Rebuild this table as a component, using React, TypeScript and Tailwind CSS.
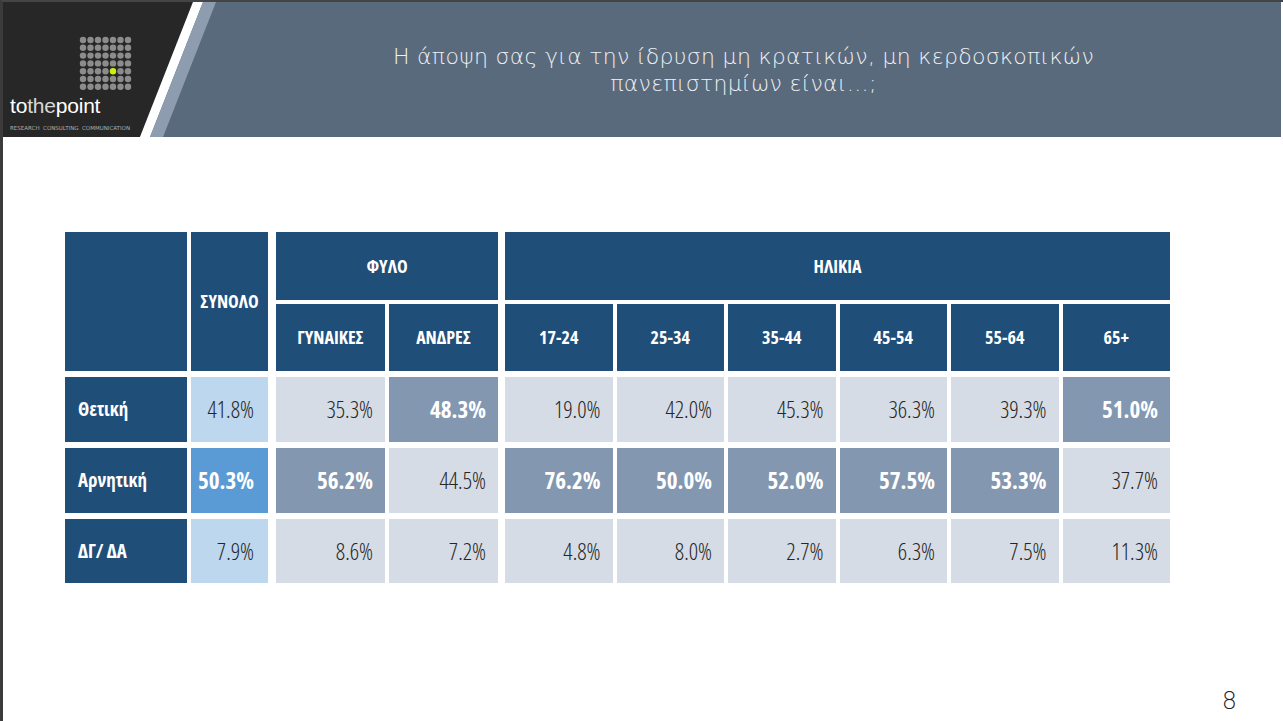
import React from "react";

const rows = [
  {
    label: "Θετική",
    cells: [
      ["41.8%", "s"],
      ["35.3%", "g"],
      ["48.3%", "h"],
      ["19.0%", "g"],
      ["42.0%", "g"],
      ["45.3%", "g"],
      ["36.3%", "g"],
      ["39.3%", "g"],
      ["51.0%", "h"],
    ],
  },
  {
    label: "Αρνητική",
    cells: [
      ["50.3%", "S"],
      ["56.2%", "h"],
      ["44.5%", "g"],
      ["76.2%", "h"],
      ["50.0%", "h"],
      ["52.0%", "h"],
      ["57.5%", "h"],
      ["53.3%", "h"],
      ["37.7%", "g"],
    ],
  },
  {
    label: "ΔΓ/ ΔΑ",
    cells: [
      ["7.9%", "s"],
      ["8.6%", "g"],
      ["7.2%", "g"],
      ["4.8%", "g"],
      ["8.0%", "g"],
      ["2.7%", "g"],
      ["6.3%", "g"],
      ["7.5%", "g"],
      ["11.3%", "g"],
    ],
  },
];

const ages = ["17-24", "25-34", "35-44", "45-54", "55-64", "65+"];

const condFont = {
  fontFamily: '"Open Sans", "DejaVu Sans Condensed", sans-serif',
  fontStretch: "75%",
};

function cellClass(kind: string) {
  switch (kind) {
    case "s":
      return "bg-[#bdd7ee] text-[#262626] font-light";
    case "S":
      return "bg-[#5b9bd5] text-white font-bold";
    case "h":
      return "bg-[#8497b0] text-white font-bold";
    default:
      return "bg-[#d6dce5] text-[#262626] font-light";
  }
}

function DotGrid() {
  const dots = [];
  for (let j = 0; j < 7; j++) {
    for (let i = 0; i < 7; i++) {
      const yellow = i === 4 && j === 4;
      dots.push(
        <circle
          key={`${i}-${j}`}
          cx={4 + i * 7.5}
          cy={4 + j * 7.8}
          r={3.2}
          fill={yellow ? "#cdf012" : "#8c8c8c"}
        />
      );
    }
  }
  return (
    <svg width="54" height="55" viewBox="0 0 54 55">
      {dots}
    </svg>
  );
}

const headCell = "bg-[#1f4e79] flex items-center justify-center text-white font-bold text-[18px]";

export default function App() {
  return (
    <div className="w-[1283px] h-[721px] bg-white flex flex-col border-l-[3px] border-t-[2px] border-l-[#3b3b3b] border-t-[#454545] overflow-hidden">
      {/* Header */}
      <div className="relative h-[135px] flex shrink-0 mr-[2px] -ml-[3px]">
        <svg className="absolute inset-0" width="1281" height="135" viewBox="0 0 1281 135">
          <rect x="0" y="0" width="1281" height="135" fill="#5a6a7d" />
          <polygon points="0,0 193,0 140,135 0,135" fill="#272727" />
          <polygon points="193,0 203,0 150,135 140,135" fill="#ffffff" />
          <polygon points="203,0 216,0 163,135 150,135" fill="#8e9cb0" />
        </svg>
        <div className="relative w-[140px] flex flex-col pl-[10px] pt-[34px]">
          <div className="ml-[69px]">
            <DotGrid />
          </div>
          <div
            className="text-[21px] leading-[21px] text-white mt-[4px] tracking-[-0.2px]"
            style={{ fontFamily: '"Liberation Sans", Arial, sans-serif' }}
          >
            to<span className="text-[#d8d8d8]">the</span>point
          </div>
          <div
            className="mt-[9px] text-[5.5px] leading-[6px] text-[#b0b0b0] tracking-[0px] whitespace-nowrap"
            style={{ fontFamily: '"DejaVu Sans", sans-serif' }}
          >
            RESEARCH&nbsp; CONSULTING&nbsp; COMMUNICATION
          </div>
        </div>
        <div className="relative flex-1 flex justify-center pl-[66px] pt-[41px]">
          <div
            className="text-center text-[22px] leading-[27px] text-[#eef1f4] font-extralight tracking-[0.3px] whitespace-nowrap"
            style={{ fontFamily: '"DejaVu Sans", "Noto Sans", sans-serif' }}
          >
            Η άποψη σας για την ίδρυση μη κρατικών, μη κερδοσκοπικών
            <br />
            πανεπιστημίων είναι…;
          </div>
        </div>
      </div>

      {/* Body */}
      <div className="flex-1 flex flex-col pl-[62px] pt-[95px]">
        <div
          className="grid gap-x-[4px] gap-y-[4px] grid-cols-[122px_77px_113px_109px_110.5px_107.5px_107.5px_107.5px_107.5px_107.5px] grid-rows-[68px_67px_67px_67px_66px] w-[1105px]"
          style={condFont}
        >
          <div className="row-span-2 bg-[#1f4e79]" />
          <div className={`row-span-2 ${headCell}`}>ΣΥΝΟΛΟ</div>
          <div className={`col-span-2 ml-[4px] ${headCell}`}>ΦΥΛΟ</div>
          <div className={`col-span-6 ml-[3px] ${headCell}`}>ΗΛΙΚΙΑ</div>
          <div className={`ml-[4px] ${headCell}`}>ΓΥΝΑΙΚΕΣ</div>
          <div className={headCell}>ΑΝΔΡΕΣ</div>
          {ages.map((a, i) => (
            <div key={a} className={`${i === 0 ? "ml-[3px]" : ""} ${headCell}`}>
              {a}
            </div>
          ))}

          {rows.map((r) => (
            <React.Fragment key={r.label}>
              <div className="mt-[2px] bg-[#1f4e79] flex items-center pl-[13px] text-white font-bold text-[19px]">
                {r.label}
              </div>
              {r.cells.map(([v, k], i) => (
                <div
                  key={i}
                  className={`mt-[2px] ${i === 1 ? "ml-[4px]" : ""} ${i === 3 ? "ml-[3px]" : ""} ${i === 0 ? "pr-[14px]" : "pr-[12px]"} ${cellClass(k)} flex items-center justify-end text-[23px]`}
                >
                  {v}
                </div>
              ))}
            </React.Fragment>
          ))}
        </div>
        <div className="mt-auto flex justify-end pr-[46px] pb-[8px]">
          <span
            className="text-[24px] leading-[24px] text-[#222] font-light"
            style={{ fontFamily: '"DejaVu Sans", sans-serif' }}
          >
            8
          </span>
        </div>
      </div>
    </div>
  );
}
